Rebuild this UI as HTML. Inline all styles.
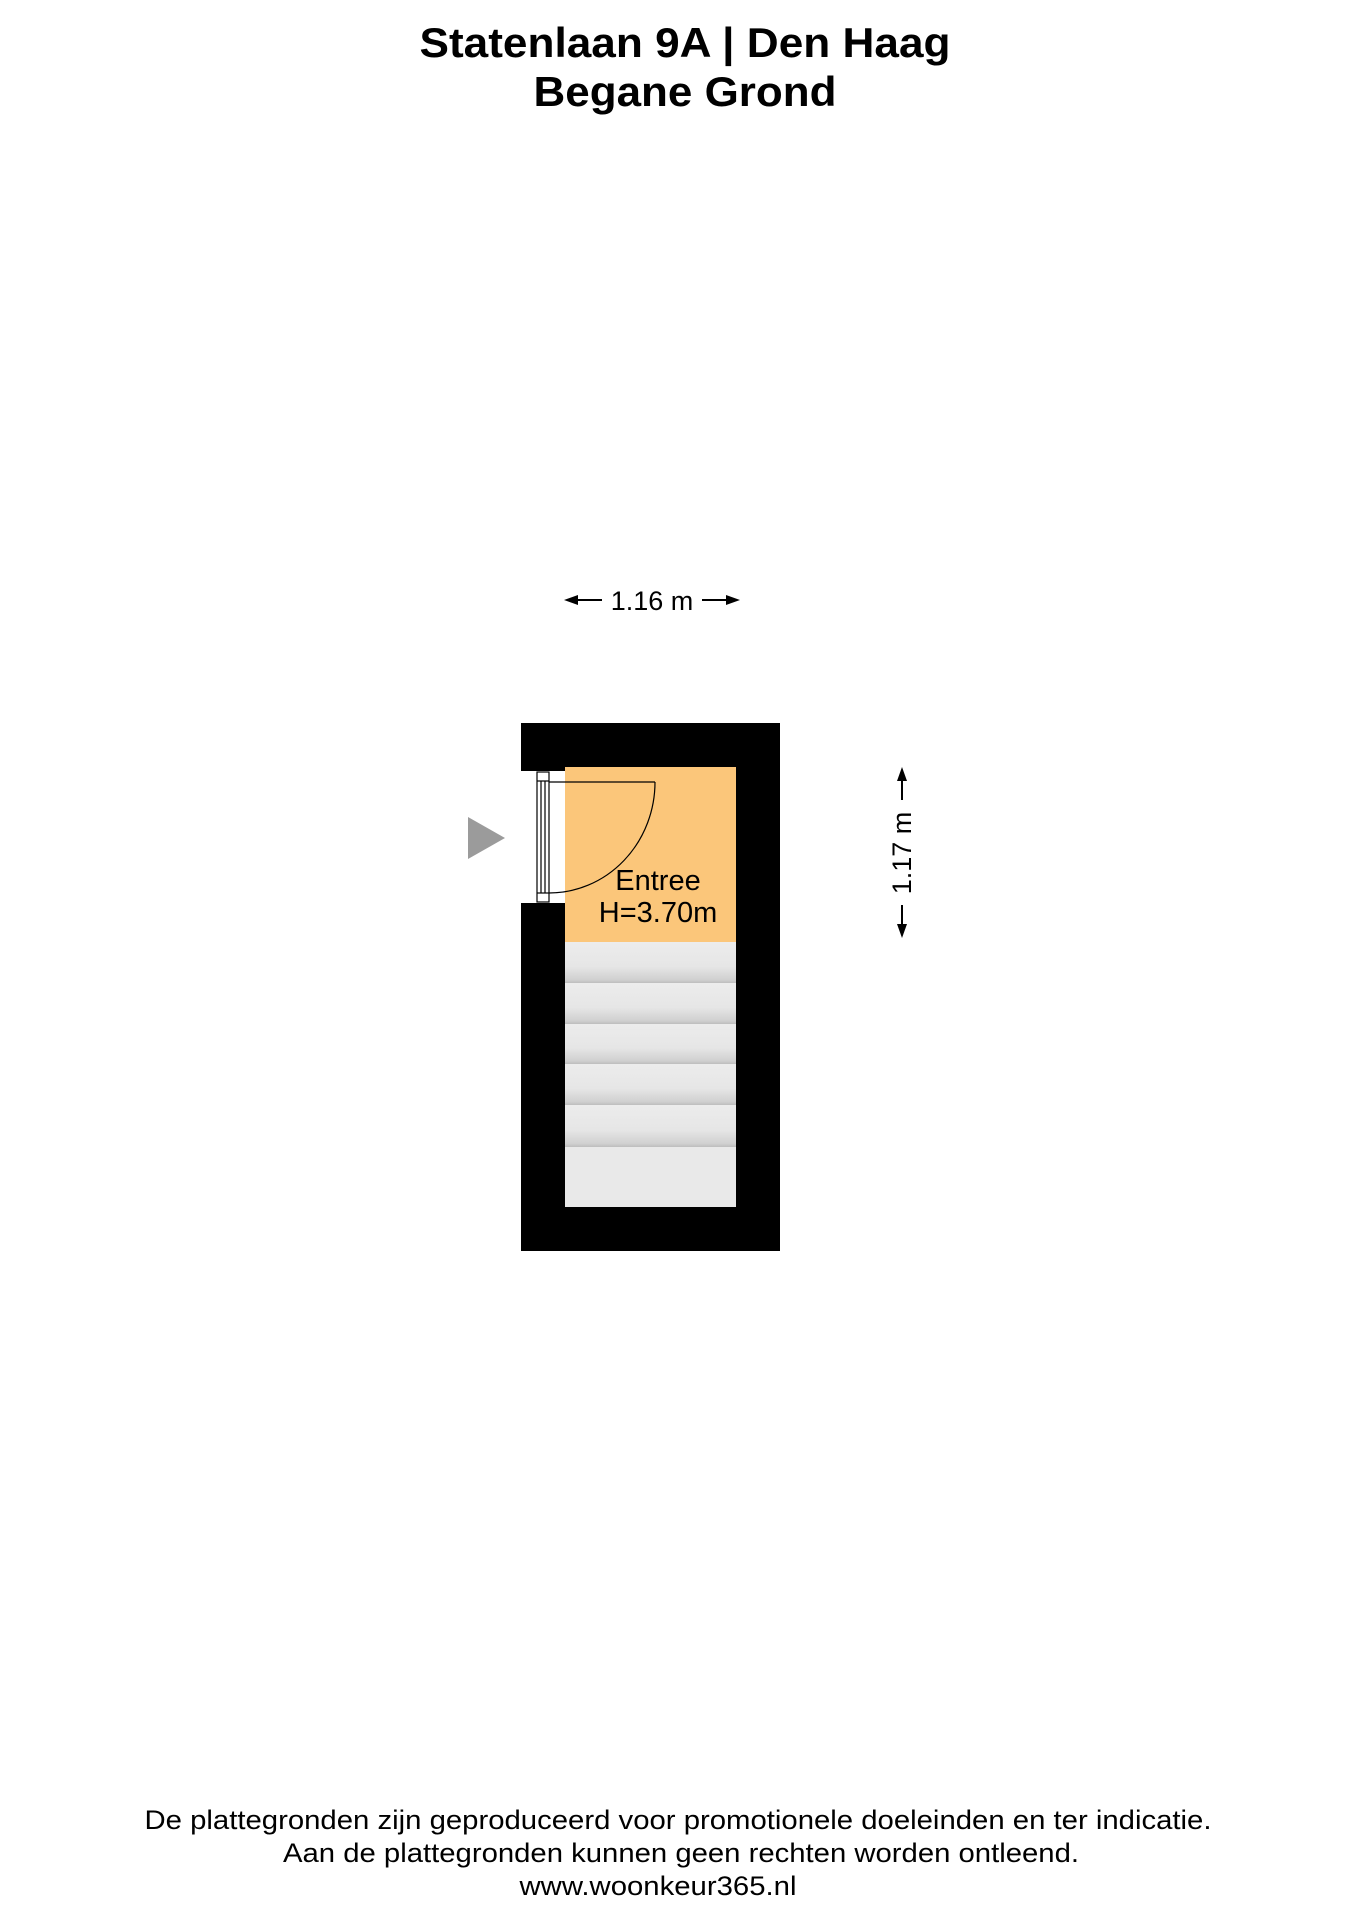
<!DOCTYPE html>
<html><head><meta charset="utf-8"><style>
html,body{margin:0;padding:0;background:#fff;}
svg{display:block;}
</style></head><body>
<svg width="1358" height="1920" viewBox="0 0 1358 1920" xmlns="http://www.w3.org/2000/svg" font-family="Liberation Sans, Arial, sans-serif">
<defs>
<linearGradient id="st" x1="0" y1="0" x2="0" y2="1">
<stop offset="0" stop-color="#ececec"/><stop offset="0.6" stop-color="#e6e6e6"/><stop offset="0.92" stop-color="#d0d0d0"/><stop offset="1" stop-color="#bdbdbd"/>
</linearGradient>
</defs>
<text x="685" y="57" text-anchor="middle" font-size="42" font-weight="bold" fill="#000" textLength="531" lengthAdjust="spacingAndGlyphs">Statenlaan 9A | Den Haag</text>
<text x="685" y="106" text-anchor="middle" font-size="42" font-weight="bold" fill="#000" textLength="303" lengthAdjust="spacingAndGlyphs">Begane Grond</text>

<g stroke="#000" stroke-width="2">
<line x1="572" y1="600" x2="602" y2="600"/>
<line x1="702" y1="600" x2="732" y2="600"/>
</g>
<polygon points="564,600 578,595 578,605" fill="#000"/>
<polygon points="740,600 726,595 726,605" fill="#000"/>
<text x="652" y="610" text-anchor="middle" font-size="27" fill="#000">1.16 m</text>

<line x1="902" y1="775" x2="902" y2="800" stroke="#000" stroke-width="2"/>
<line x1="902" y1="905" x2="902" y2="930" stroke="#000" stroke-width="2"/>
<polygon points="902,767 897,781 907,781" fill="#000"/>
<polygon points="902,938 897,924 907,924" fill="#000"/>
<text x="0" y="0" transform="translate(911,853) rotate(-90)" text-anchor="middle" font-size="27" fill="#000">1.17 m</text>

<rect x="521" y="723" width="259" height="528" fill="#000"/>
<rect x="565" y="767" width="171" height="440" fill="#ececec"/>
<rect x="565" y="767" width="171" height="175" fill="#fbc67a"/>
<rect x="565" y="942" width="171" height="41" fill="url(#st)"/>
<rect x="565" y="983" width="171" height="41" fill="url(#st)"/>
<rect x="565" y="1024" width="171" height="40" fill="url(#st)"/>
<rect x="565" y="1064" width="171" height="41" fill="url(#st)"/>
<rect x="565" y="1105" width="171" height="42" fill="url(#st)"/>
<rect x="565" y="1147" width="171" height="60" fill="#e9e9e9"/>

<rect x="521" y="771" width="44" height="132" fill="#fff"/>
<g stroke="#000" stroke-width="1.2" fill="none">
<rect x="537" y="772" width="12" height="130"/>
<line x1="537" y1="781" x2="549" y2="781"/>
<line x1="537" y1="893" x2="549" y2="893"/>
<line x1="541" y1="781" x2="541" y2="893"/>
<line x1="545" y1="781" x2="545" y2="893"/>
<line x1="549" y1="782" x2="655" y2="782"/>
<path d="M655,782 A106,111 0 0 1 549,893"/>
</g>
<polygon points="468,817 505,838 468,859" fill="#9b9b9b"/>

<text x="658" y="890" text-anchor="middle" font-size="29" fill="#000">Entree</text>
<text x="658" y="922" text-anchor="middle" font-size="29" fill="#000">H=3.70m</text>

<text x="678" y="1829" text-anchor="middle" font-size="27" fill="#000" textLength="1067" lengthAdjust="spacingAndGlyphs">De plattegronden zijn geproduceerd voor promotionele doeleinden en ter indicatie.</text>
<text x="681" y="1862" text-anchor="middle" font-size="27" fill="#000" textLength="796" lengthAdjust="spacingAndGlyphs">Aan de plattegronden kunnen geen rechten worden ontleend.</text>
<text x="658" y="1895" text-anchor="middle" font-size="27" fill="#000" textLength="277" lengthAdjust="spacingAndGlyphs">www.woonkeur365.nl</text>
</svg>
</body></html>
